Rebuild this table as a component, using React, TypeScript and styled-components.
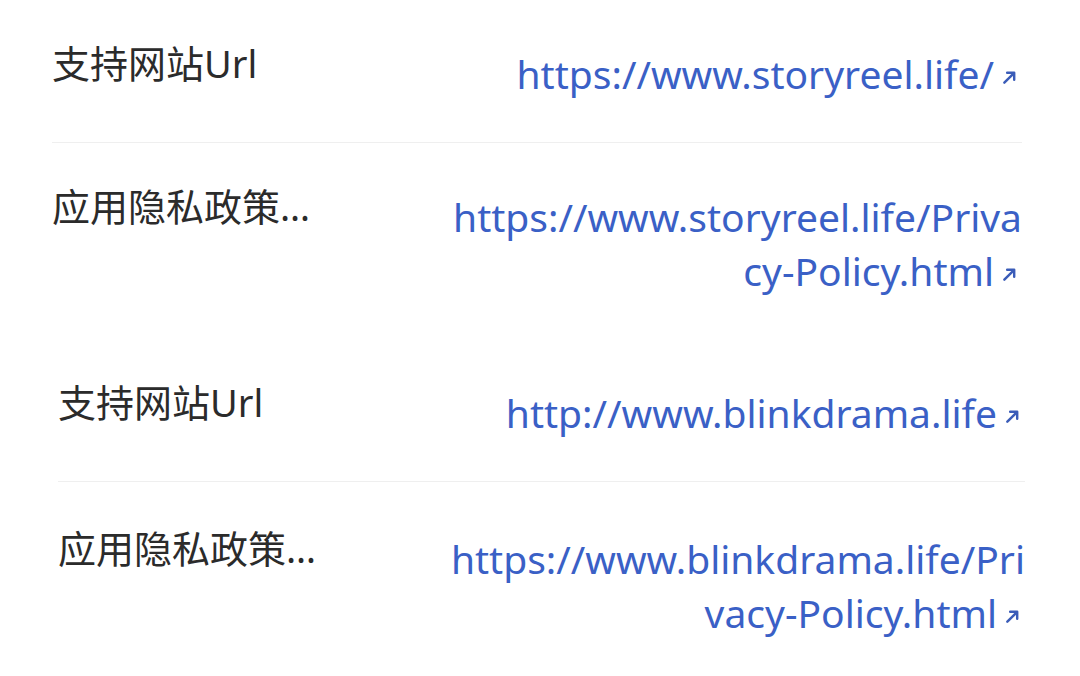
import React from "react";
import styled, { createGlobalStyle } from "styled-components";

const Global = createGlobalStyle`
  html, body { margin: 0; padding: 0; background: #ffffff; }
  body { width: 1080px; height: 676px; overflow: hidden; }
`;

const Page = styled.div`
  display: flex;
  flex-direction: column;
  width: 1080px;
`;

const Section = styled.div<{ $left: number; $right: number }>`
  display: flex;
  flex-direction: column;
  padding-left: ${(p) => p.$left}px;
  padding-right: ${(p) => p.$right}px;
`;

const Row = styled.div<{ $divider?: boolean; $top: number }>`
  display: flex;
  justify-content: space-between;
  align-items: flex-start;
  padding: ${(p) => p.$top}px 0 41px;
  border-bottom: ${(p) => (p.$divider ? "1.5px solid #efefef" : "none")};
`;

const Label = styled.div`
  flex: 0 0 auto;
  width: 274px;
  margin-top: -12px;
  font-family: "Noto Sans", "Noto Sans CJK SC", sans-serif;
  font-size: 38px;
  line-height: 56px;
  color: #2b2b2b;
  white-space: nowrap;
  overflow: hidden;
  text-overflow: ellipsis;
`;

const Link = styled.a`
  flex: 0 0 auto;
  width: 580px;
  text-align: right;
  font-family: "Noto Sans", "Open Sans", sans-serif;
  font-size: 39px;
  line-height: 54px;
  color: #3a60c6;
  text-decoration: none;
  word-break: break-all;
`;

const Arrow = styled.svg`
  width: 15px;
  height: 15px;
  margin-left: 8px;
  margin-right: 5px;
  vertical-align: 4px;
`;

const ExtIcon = () => (
  <Arrow viewBox="0 0 16 16" fill="none">
    <path d="M2.5 13.5 L12.5 3.5" stroke="#3a5cb8" strokeWidth="2.6" strokeLinecap="round" />
    <path d="M5.5 3 H13 V10.5" stroke="#3a5cb8" strokeWidth="2.6" strokeLinecap="round" strokeLinejoin="round" />
  </Arrow>
);

type Item = { label: string; url: string };

const blocks: { left: number; right: number; items: Item[] }[] = [
  {
    left: 52,
    right: 58,
    items: [
      { label: "支持网站Url", url: "https://www.storyreel.life/" },
      { label: "应用隐私政策Url", url: "https://www.storyreel.life/Privacy-Policy.html" },
    ],
  },
  {
    left: 58,
    right: 55,
    items: [
      { label: "支持网站Url", url: "http://www.blinkdrama.life" },
      { label: "应用隐私政策Url", url: "https://www.blinkdrama.life/Privacy-Policy.html" },
    ],
  },
];

export default function App() {
  return (
    <>
      <Global />
      <Page>
        {blocks.map((b, bi) => (
          <Section key={bi} $left={b.left} $right={b.right}>
            {b.items.map((it, i) => (
              <Row key={i} $divider={i === 0} $top={bi === 1 && i === 1 ? 50 : 47}>
                <Label>{it.label}</Label>
                <Link href={it.url}>
                  {it.url}
                  <ExtIcon />
                </Link>
              </Row>
            ))}
          </Section>
        ))}
      </Page>
    </>
  );
}
